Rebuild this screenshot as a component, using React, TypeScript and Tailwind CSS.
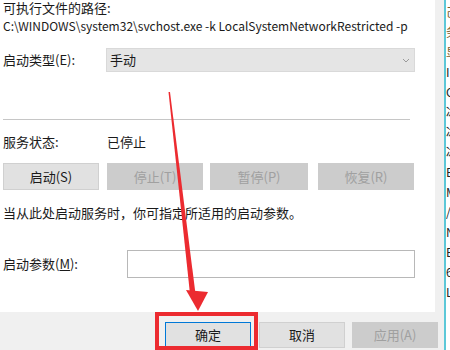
import React from "react";

const F = { fontFamily: '"Noto Sans CJK SC", "Noto Sans", sans-serif' };

function Btn({ label, disabled, w, primary }: { label: string; disabled?: boolean; w: string; primary?: boolean }) {
  return (
    <div
      className={`${w} flex items-center justify-center text-[13px] border ${
        disabled
          ? "bg-[#cccccc] border-[#cccccc] text-[#a0a0a0]"
          : primary
          ? "bg-[#e1e1e1] border-[#0078d7] text-[#1a1a1a]"
          : "bg-[#e1e1e1] border-[#d0d0d0] text-[#1a1a1a]"
      }`}
    >
      {label}
    </div>
  );
}

export default function App() {
  const frags = ["己", "务", "显", "I", "C", "冰", "冰", "冰", "E", "M", "/", "N", "E", "6", "L", "", ""];
  return (
    <div className="relative w-[450px] h-[350px] overflow-hidden bg-[#f0f0f0] flex text-[#1a1a1a]" style={F}>
      <div className="w-[444px] flex flex-col">
        <div className="w-[435px] h-[312px] bg-white pl-[3px] flex flex-col text-[13px]">
          <div className="h-[16px] leading-[16px]">可执行文件的路径:</div>
          <div className="mt-[2px] h-[16px] leading-[16px] whitespace-nowrap text-[12px]">
            C:\WINDOWS\system32\svchost.exe -k LocalSystemNetworkRestricted -p
          </div>
          <div className="mt-[14px] h-[24px] flex items-center">
            <div className="w-[103px]">启动类型(<span>E</span>):</div>
            <div className="w-[309px] h-[24px] bg-[#e5e5e5] border border-[#d9d9d9] flex items-center justify-between pl-[3px] pr-[4px]">
              <span>手动</span>
              <svg width="8" height="5" viewBox="0 0 8 5">
                <path d="M1 1 L4 4 L7 1" fill="none" stroke="#9a9a9a" strokeWidth="1" />
              </svg>
            </div>
          </div>
          <div className="mt-[47px] h-px w-[407px] bg-[#c6c6c6]" />
          <div className="mt-[14px] h-[16px] leading-[16px] flex">
            <div className="w-[104px]">服务状态:</div>
            <div>已停止</div>
          </div>
          <div className="mt-[13px] h-[27px] flex">
            <Btn label="启动(S)" w="w-[96px]" />
            <div className="w-[8px]" />
            <Btn label="停止(T)" w="w-[96px]" disabled />
            <div className="w-[7px]" />
            <Btn label="暂停(P)" w="w-[98px]" disabled />
            <div className="w-[10px]" />
            <Btn label="恢复(R)" w="w-[96px]" disabled />
          </div>
          <div className="mt-[15px] h-[16px] leading-[16px] whitespace-nowrap">
            当从此处启动服务时，你可指定所适用的启动参数。
          </div>
          <div className="mt-[29px] h-[28px] flex items-center">
            <div className="w-[124px]">启动参数(<span className="underline">M</span>):</div>
            <div className="w-[288px] h-[28px] bg-white border border-[#b8b8b8]" />
          </div>
        </div>
        <div className="flex-1 flex pl-[165px] pt-[10px] gap-[8px]">
          <div className="h-[26px] flex">
            <Btn label="确定" w="w-[86px]" primary />
          </div>
          <div className="h-[26px] flex">
            <Btn label="取消" w="w-[86px]" />
          </div>
          <div className="h-[26px] flex ml-[-1px]">
            <Btn label="应用(A)" w="w-[86px]" disabled />
          </div>
        </div>
      </div>
      <div className="w-[2px] h-full bg-[#5cc8d8]" />
      <div className="w-[4px] h-full bg-white overflow-hidden flex flex-col text-[12px] leading-[20px] pt-[2px]">
        {frags.map((c, i) => (
          <div key={i} className={`h-[20px] whitespace-nowrap ${i < 3 ? "text-[#7a5a2a]" : "text-[#222]"}`}>
            {c}
          </div>
        ))}
      </div>

      <div className="absolute left-[155px] top-[312px] w-[103px] h-[38px] border-[4px] border-[#ec2b30]" />
      <svg className="absolute left-0 top-0" width="450" height="350" viewBox="0 0 450 350">
        <polygon points="168.5,92 170,92 195.5,294 190,294" fill="#ec2b30" />
        <polygon points="186,290 208,292 198,311" fill="#ec2b30" />
      </svg>
    </div>
  );
}
